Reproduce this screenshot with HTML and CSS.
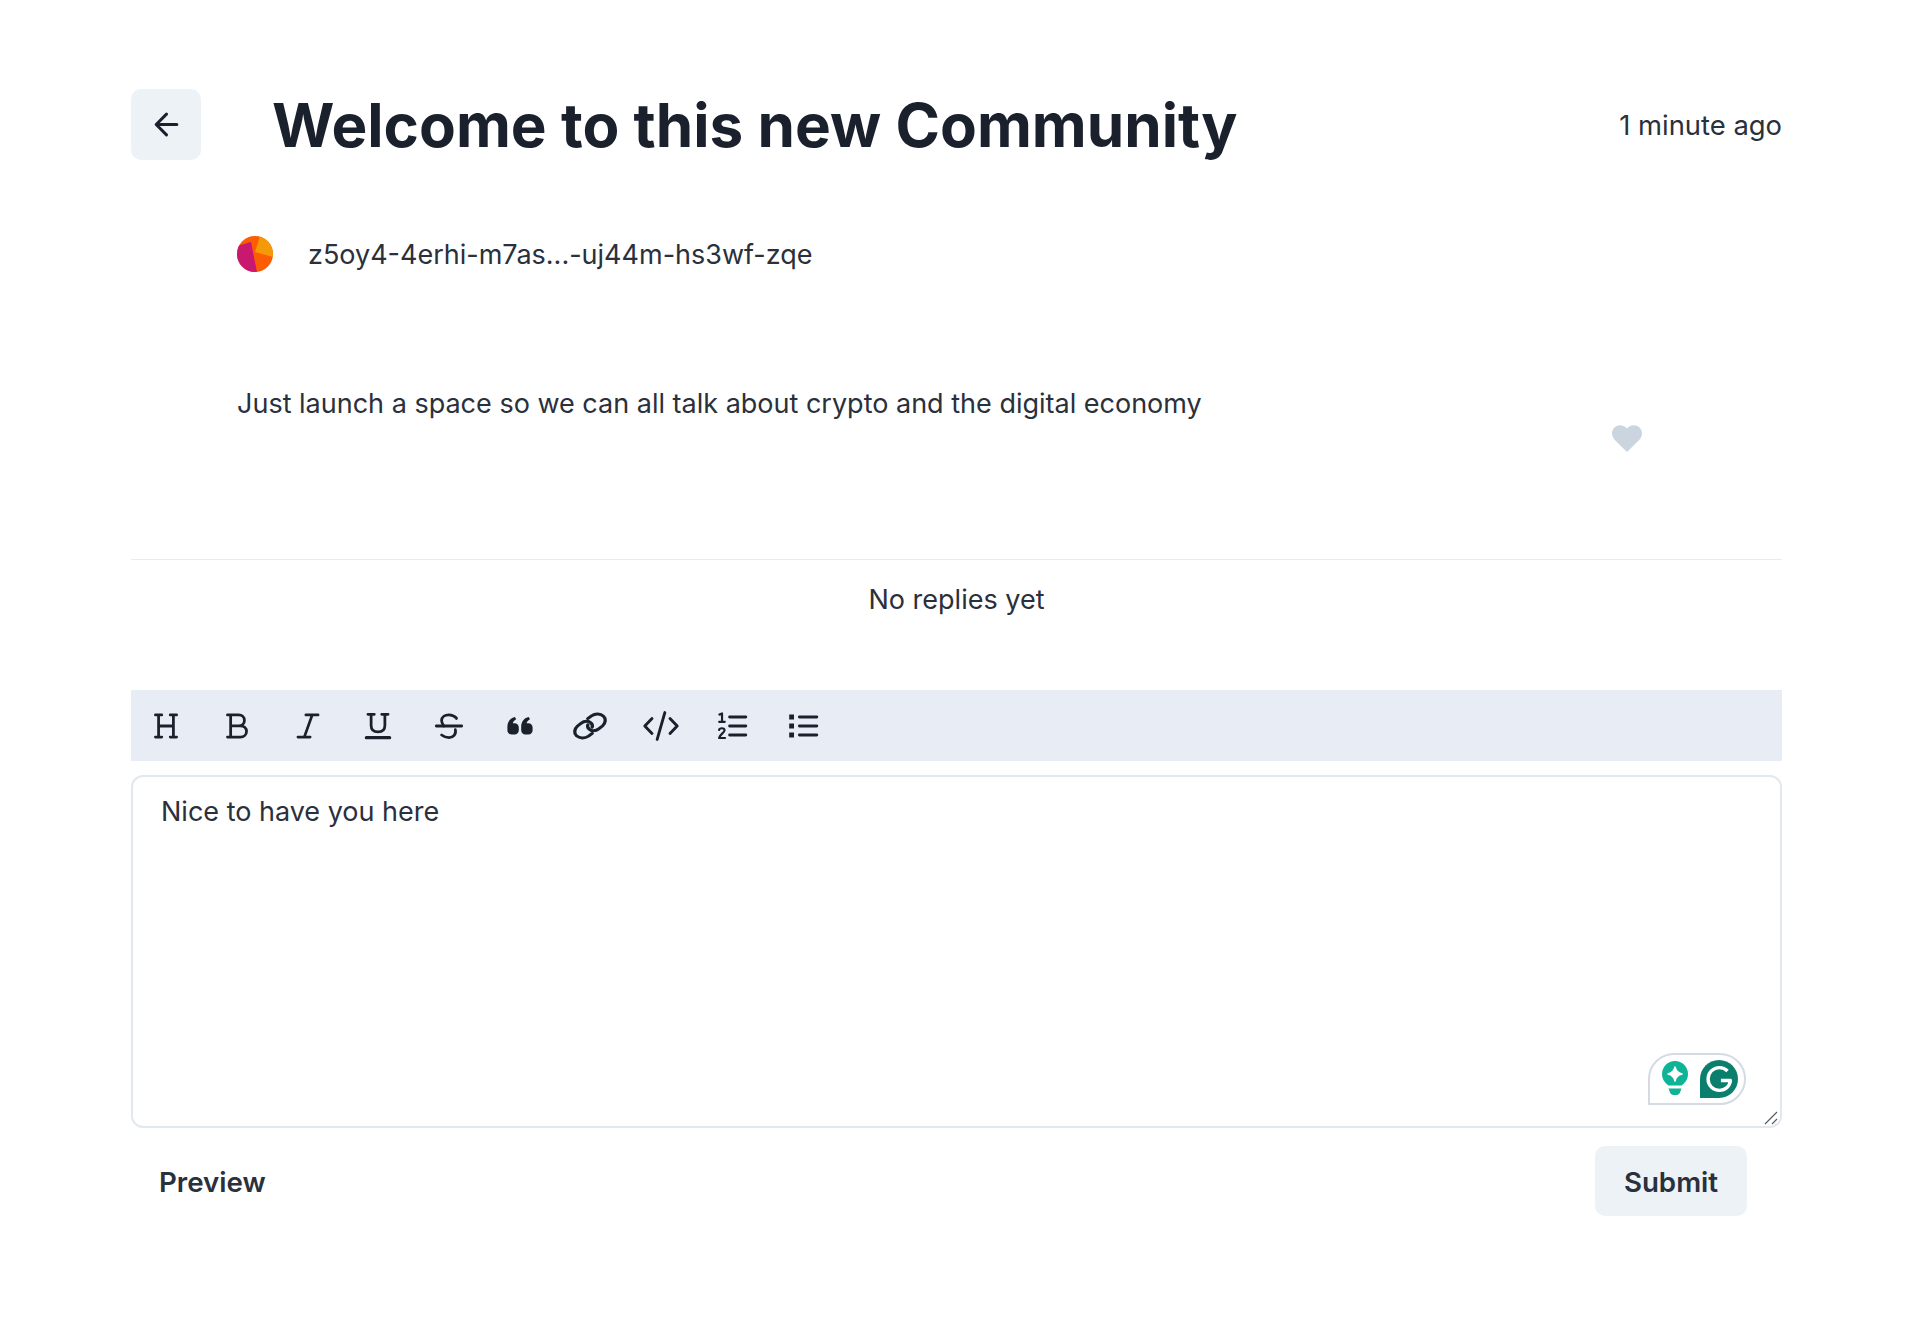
FILE: index.html
```html
<!DOCTYPE html>
<html lang="en">
<head>
  <meta charset="UTF-8" />
  <title>Welcome to this new Community</title>
  <link rel="stylesheet" href="styles.css">
</head>
<body>
  <main class="page">
    <header class="post-header">
      <button class="back-btn" aria-label="Back">
        <svg width="33" height="33" viewBox="0 0 24 24" fill="none" stroke="#1a202c" stroke-width="2.200" stroke-linecap="round" stroke-linejoin="round">
          <path d="M19.500 12H5M12 4.500 4.500 12 12 19.500" />
        </svg>
      </button>
      <h1 class="post-title">Welcome to this new Community</h1>
      <span class="post-time">1 minute ago</span>
    </header>

    <div class="author">
      <svg class="avatar" viewBox="0 0 36 36">
        <defs><clipPath id="avatarClip"><circle cx="18" cy="18" r="18" /></clipPath></defs>
        <g clip-path="url(#avatarClip)">
          <rect width="36" height="36" fill="#fc5c03" />
          <path d="M23 0H36V21L18 16Z" fill="#f39a06" />
          <path d="M0 10L14 6L20 36H0Z" fill="#c9186f" />
          <path d="M28 36L36 28V36Z" fill="#3cb4e6" />
        </g>
      </svg>
      <span class="author-name">z5oy4-4erhi-m7as...-uj44m-hs3wf-zqe</span>
    </div>

    <div class="post-body">
      <p class="post-text">Just launch a space so we can all talk about crypto and the digital economy</p>
      <svg class="heart" viewBox="0 0 30 27">
        <path d="M15 27 2.600 14.700C-.9 11-.8 5.500 2.600 2.400 6-.8 11.300-.6 15 3.500 18.700-.6 24-.8 27.400 2.400 30.800 5.500 30.900 11 27.400 14.700Z" fill="#cbd5e0" />
      </svg>
    </div>

    <div class="replies">No replies yet</div>

    <div class="toolbar">
      <button class="tool" aria-label="Heading">
        <svg viewBox="-5 -5 34 34" fill="none" stroke="#1a202c" stroke-width="2.600" stroke-linecap="round" stroke-linejoin="round"><path d="M2 1.500H8M5 1.500V22.500M2 22.500H8M16 1.500H22M19 1.500V22.500M16 22.500H22M5 12H19" /></svg>
      </button>
      <button class="tool" aria-label="Bold">
        <svg viewBox="-5 -5 34 34" fill="none" stroke="#1a202c" stroke-width="2.600" stroke-linecap="round" stroke-linejoin="round"><path d="M3 1.500H13.500C17 1.500 19 3.800 19 6.700 19 9.600 17 11.800 13.500 11.800H6M6 1.500V22.500M3 22.500H15C18.500 22.500 21 20.300 21 17.200 21 14 18.500 11.800 15 11.800H6" /></svg>
      </button>
      <button class="tool" aria-label="Italic">
        <svg viewBox="-5 -5 34 34" fill="none" stroke="#1a202c" stroke-width="2.600" stroke-linecap="round" stroke-linejoin="round"><path d="M10 1.500H21.500M16 1.500 8.500 22.500M2.500 22.500H14" /></svg>
      </button>
      <button class="tool" aria-label="Underline">
        <svg viewBox="-5 -5 34 34" fill="none" stroke="#1a202c" stroke-width="2.600" stroke-linecap="round" stroke-linejoin="round"><path d="M2.500 1H8.500M5.500 1V11.500C5.500 15.500 8 17.500 12 17.500S18.500 15.500 18.500 11.500V1M15.500 1H21.500" /><path d="M1 23H23" stroke-width="3" /></svg>
      </button>
      <button class="tool" aria-label="Strikethrough">
        <svg viewBox="-5 -5 34 34" fill="none" stroke="#1a202c" stroke-width="2.600" stroke-linecap="round" stroke-linejoin="round"><path d="M0 12H24" /><path d="M19 5V4.500C17 2.500 14.500 1.500 12 1.500 8 1.500 5 3.500 5 7 5 8.500 5.800 10 7 12M18 15.500C19 19.800 16 23 12 23 9.500 23 7 22 5 20.500" /></svg>
      </button>
      <button class="tool" aria-label="Quote">
        <svg viewBox="-3 -3 30 30" fill="#1a202c"><path d="M1.500 12.500C1.500 8.500 4.200 5 7.800 4.500L8.800 6.300C7 7.200 6.200 8.500 6 9.800H7.500C9.500 9.800 11 11.300 11 13.300V15.500C11 17.500 9.500 19 7.500 19H5C3 19 1.500 17.500 1.500 15.500ZM13 12.500C13 8.500 15.700 5 19.300 4.500L20.300 6.300C18.500 7.200 17.700 8.500 17.500 9.800H19C21 9.800 22.500 11.300 22.500 13.300V15.500C22.500 17.500 21 19 19 19H16.500C14.500 19 13 17.500 13 15.500Z" /></svg>
      </button>
      <button class="tool" aria-label="Link">
        <svg viewBox="-3 -3 30 30" fill="none" stroke="#1a202c" stroke-width="2.200" stroke-linecap="round" stroke-linejoin="round"><g transform="translate(12 12) scale(1.250 1.120) translate(-12 -12)"><path d="M10.500 6.500 13 4.500C15.500 2.600 19 2.700 21 4.700 22.800 6.600 22.500 9.800 20.300 12L17.800 14.200C15.800 16 12.800 16 11.300 14.300 10.400 13.300 10.200 12.200 10.600 11" /><path d="M13.500 17.500 11 19.500C8.500 21.400 5 21.300 3 19.300 1.200 17.400 1.500 14.200 3.700 12L6.200 9.800C8.200 8 11.200 8 12.700 9.700 13.600 10.700 13.800 11.800 13.400 13" /></g></svg>
      </button>
      <button class="tool" aria-label="Code">
        <svg viewBox="-3 -3 30 30" fill="none" stroke="#1a202c" stroke-width="2.400" stroke-linecap="round" stroke-linejoin="round"><path d="M4.500 5.700-1.500 12 4.500 18.300M19.500 5.700 25.500 12 19.500 18.300M15.200 .8 8.800 23.200" /></svg>
      </button>
      <button class="tool" aria-label="Ordered list">
        <svg viewBox="-3 -3 30 30" fill="none" stroke="#1a202c" stroke-width="2.400" stroke-linecap="round" stroke-linejoin="round"><path d="M10 4.500H23.500M10 12H23.500M10 19.500H23.500" /><path d="M1.500 2.500 3.700 1.500V8.500M1.300 8.500H6" stroke-width="1.800" /><path d="M1.200 15.300C1.500 13.500 5.800 13.300 5.800 15.500 5.800 17.500 2 18.800 1.200 22H6.200" stroke-width="1.800" /></svg>
      </button>
      <button class="tool" aria-label="Bullet list">
        <svg viewBox="-3 -3 30 30" fill="none" stroke="#1a202c" stroke-width="2.400" stroke-linecap="round"><path d="M9 4.500H23.500M9 12H23.500M9 19.500H23.500" /><path d="M.5 2.500H4.500V6.500H.5ZM.5 10H4.500V14H.5ZM.5 17.500H4.500V21.500H.5Z" fill="#1a202c" stroke="none" /></svg>
      </button>
    </div>

    <div class="editor">
      <textarea class="editor-input">Nice to have you here</textarea>
      <div class="grammarly">
        <svg class="bulb" viewBox="0 0 26 36">
          <path d="M13 0C5.800 0 0 5.800 0 13 0 18 2.800 22 6.500 24.500H19.500C23.200 22 26 18 26 13 26 5.800 20.200 0 13 0Z" fill="#0fb496" />
          <path d="M13 6C13.800 10 15.500 12 20 13 15.500 14 13.800 16 13 20 12.200 16 10.500 14 6 13 10.500 12 12.200 10 13 6Z" fill="#fff" stroke="#fff" stroke-width="1.500" stroke-linejoin="round" />
          <path d="M6.500 27.500H19.500L18 31.500C17.500 33 16 34 14.500 34H11.500C10 34 8.500 33 8 31.500Z" fill="#0fb496" />
        </svg>
        <svg class="g-mark" viewBox="0 0 40 40">
          <path d="M20 0C31 0 40 9 40 20S31 40 20 40H0V20C0 9 9 0 20 0Z" fill="#0b7f6e" />
          <path d="M29 11.500C26.800 9.300 23.700 8 20.500 8 13.800 8 8.500 13.300 8.500 20S13.800 32 20.500 32C26.700 32 31.500 27.500 32 21.500H22" fill="none" stroke="#fff" stroke-width="3.600" stroke-linejoin="round" />
        </svg>
      </div>
      <svg class="resize-grip" viewBox="0 0 14 14" fill="none" stroke="#555b66" stroke-width="1.200">
        <path d="M1 13 13 1M8 13 13 8" />
      </svg>
    </div>

    <footer class="actions">
      <button class="link-btn">Preview</button>
      <button class="submit-btn">Submit</button>
    </footer>
  </main>
</body>
</html>
```

FILE: styles.css
```css
* {
  box-sizing: border-box;
}

body {
  margin: 0;
  background: #fff;
  color: #2a303c;
  font-family: Inter, "Noto Sans", sans-serif;
  font-size: 27px;
}

button {
  font-family: inherit;
  color: inherit;
  border: none;
  background: none;
  padding: 0;
}

.page {
  width: 1651px;
  margin-left: 131px;
  padding-top: 89px;
}

.post-header {
  display: flex;
  align-items: center;
  height: 71px;
}

.back-btn {
  width: 70px;
  height: 71px;
  border-radius: 10px;
  background: #edf2f7;
  display: flex;
  align-items: center;
  justify-content: center;
}

.post-title {
  margin: 2px 0 0 71px;
  color: #1a202c;
  font-size: 60.200px;
  font-weight: 700;
  line-height: 71px;
}

.post-time {
  margin-left: auto;
  font-size: 27.400px;
}

.author {
  display: flex;
  align-items: center;
  gap: 35px;
  margin: 76px 0 0 106px;
  height: 36px;
}

.avatar {
  width: 36px;
  height: 36px;
}

.post-body {
  display: flex;
  justify-content: space-between;
  margin: 112px 140px 0 106px;
}

.post-text {
  margin: 0;
  line-height: 40px;
}

.heart {
  width: 30px;
  height: 27px;
  margin-top: 41px;
}

.replies {
  margin-top: 107px;
  height: 131px;
  padding-top: 20px;
  border-top: 1px solid #e8ecf1;
  text-align: center;
  line-height: 40px;
}

.toolbar {
  display: flex;
  height: 71px;
  background: #e8ecf5;
}

.tool {
  width: 70.700px;
  display: flex;
  align-items: center;
  justify-content: center;
}

.tool svg {
  width: 36px;
  height: 36px;
  overflow: visible;
}

.editor {
  position: relative;
  margin-top: 14px;
  height: 353px;
}

.editor-input {
  display: block;
  width: 100%;
  height: 100%;
  padding: 15px 28px;
  border: 2px solid #e2e8f0;
  border-radius: 12px;
  background: #fff;
  color: #2a303c;
  font-family: inherit;
  font-size: 27px;
  line-height: 40px;
  outline: none;
  resize: none;
}

.resize-grip {
  position: absolute;
  right: 4px;
  bottom: 3px;
  width: 14px;
  height: 14px;
}

.grammarly {
  position: absolute;
  right: 36px;
  bottom: 23px;
  width: 98px;
  height: 52px;
  display: flex;
  align-items: center;
  gap: 12px;
  padding-left: 12px;
  background: #fff;
  border: 2px solid #d5dae5;
  border-radius: 26px 26px 26px 0;
}

.bulb {
  width: 26px;
  height: 36px;
}

.g-mark {
  width: 38px;
  height: 38px;
}

.actions {
  display: flex;
  align-items: center;
  justify-content: space-between;
  margin-top: 18px;
  padding: 0 35px 0 28px;
}

.link-btn,
.submit-btn {
  color: #2a303c;
  font-size: 27.700px;
  font-weight: 600;
  padding-top: 2px;
}

.submit-btn {
  width: 152px;
  height: 70px;
  border-radius: 10px;
  background: #edf2f7;
}
```
